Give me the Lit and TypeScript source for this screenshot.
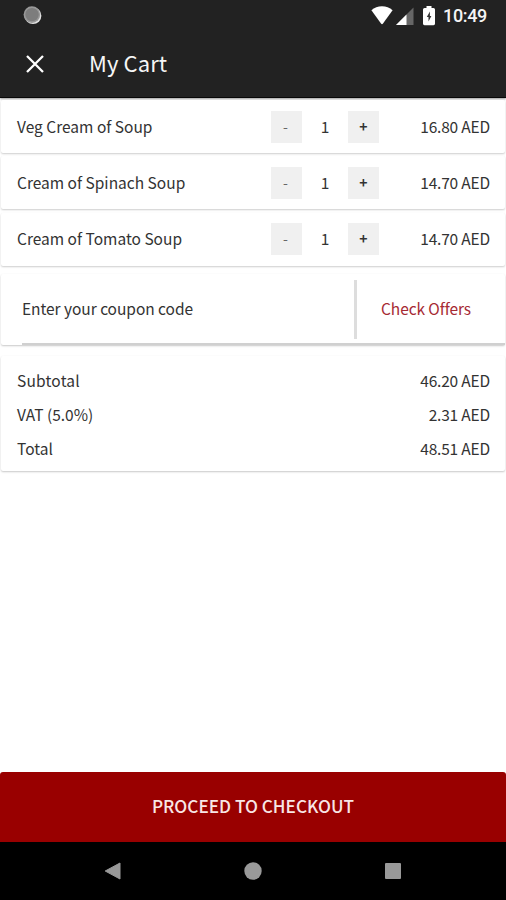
import { LitElement, html, css } from "lit";
import { customElement, property } from "lit/decorators.js";

interface Item { name: string; qty: number; price: string; }

const items: Item[] = [
  { name: "Veg Cream of Soup", qty: 1, price: "16.80 AED" },
  { name: "Cream of Spinach Soup", qty: 1, price: "14.70 AED" },
  { name: "Cream of Tomato Soup", qty: 1, price: "14.70 AED" },
];

const totals = [
  { label: "Subtotal", value: "46.20 AED" },
  { label: "VAT (5.0%)", value: "2.31 AED" },
  { label: "Total", value: "48.51 AED" },
];

@customElement("status-bar")
class StatusBar extends LitElement {
  static styles = css`
    :host { display: flex; align-items: center; height: 31px; padding: 0 19px 0 23px; }
    svg { display: block; }
    .gap { flex: 1; }
    .wifi { margin-right: 3px; }
    .signal { margin-right: 9px; }
    .battery { margin-right: 8px; }
    .time { font: 500 18px/31px Roboto, sans-serif; color: #f4f4f4; width: 44px; white-space: nowrap; letter-spacing: -0.35px; }
  `;
  render() {
    return html`
      <svg width="19" height="19" viewBox="0 0 19 19">
        <circle cx="10" cy="9.7" r="8.4" fill="#e2e2e2" />
        <circle cx="8.9" cy="8.6" r="8.3" fill="#999" />
        <circle cx="9" cy="8.6" r="6.7" fill="#7d7d7d" />
      </svg>
      <span class="gap"></span>
      <svg class="wifi" width="22" height="19" viewBox="0 0 22 19">
        <path d="M0.4 4.2C6 -1 16 -1 21.6 4.2L12 17.6Q11 18.8 10 17.6Z" fill="#fff" />
      </svg>
      <svg class="signal" width="18" height="18" viewBox="0 0 18 18">
        <path d="M17.5 0.5V18H0Z" fill="#666" />
        <path d="M10.5 7.5V18H0Z" fill="#fff" />
      </svg>
      <svg class="battery" width="12" height="20" viewBox="0 0 12 20">
        <path d="M3.5 0H8.5V2H10.5Q12 2 12 3.5V17.8Q12 19.2 10.5 19.2H1.5Q0 19.2 0 17.8V3.5Q0 2 1.5 2H3.5Z" fill="#fff" />
        <path d="M6.9 5.5L3.8 10.9H5.5V15.4L8.4 9.9H6.9Z" fill="#333" />
      </svg>
      <span class="time">10:49</span>
    `;
  }
}

@customElement("cart-item")
class CartItem extends LitElement {
  @property({ attribute: false }) item!: Item;
  static styles = css`
    :host {
      display: grid; grid-template-columns: 254px 31px 46px 31px 1fr; align-items: center;
      height: 53px; padding: 0 15px 0 16px; margin: 0 1px; background: #fff;
      border-radius: 2px; box-shadow: 0 1px 2px rgba(0, 0, 0, 0.2);
    }
    .name, .qty, .price { padding-bottom: 2px; }
    .step { height: 32px; line-height: 31px; background: #f0f0f0; text-align: center; font-size: 14px; }
    .step.minus { color: #666; box-sizing: border-box; padding-right: 2px; }
    .step.plus { font-weight: 700; }
    .qty { text-align: center; }
    .price { text-align: right; letter-spacing: var(--num-spacing); }
  `;
  render() {
    return html`
      <span class="name">${this.item.name}</span>
      <span class="step minus">-</span>
      <span class="qty">${this.item.qty}</span>
      <span class="step plus">+</span>
      <span class="price">${this.item.price}</span>
    `;
  }
}

@customElement("app-root")
class AppRoot extends LitElement {
  static styles = css`
    :host {
      display: flex; flex-direction: column; width: 506px; height: 900px; overflow: hidden;
      background: #fff; color: #333; --num-spacing: -0.18px;
      font: 400 15.5px/20px "Noto Sans CJK SC", "Open Sans", sans-serif;
    }
    .header { height: 98px; background: #222; border-bottom: 1px solid #080808; box-sizing: border-box; flex: none; color: #f6f6f6; box-shadow: 0 1px 2px rgba(0,0,0,.4); }
    .appbar { display: flex; align-items: center; height: 66px; padding-left: 26px; }
    .title { margin: 0 0 0 45px; padding-bottom: 5px; font-size: 22px; font-weight: 400; line-height: 30px; letter-spacing: 0.1px; }
    .items { display: flex; flex-direction: column; gap: 3.3px; padding-top: 2px; }
    .card { margin: 0 1px; background: #fff; border-radius: 2px; box-shadow: 0 1px 2px rgba(0, 0, 0, 0.22); }
    .coupon { display: flex; height: 71px; margin-top: 8px; box-sizing: border-box; padding-left: 21px; }
    .field { display: flex; flex: 1; border-bottom: 2px solid #d0d0d0; }
    .placeholder { flex: 1; line-height: 68px; letter-spacing: -0.04px; }
    .bar { width: 3px; height: 59px; margin-top: 6px; background: #ddd; }
    .offers { width: 148px; box-sizing: border-box; padding-right: 10px; text-align: center; line-height: 68px; color: #a62a33; letter-spacing: -0.1px; }
    .totals { margin-top: 11px; height: 115px; box-sizing: border-box; padding: 7px 15px 0 16px; }
    .line { display: flex; justify-content: space-between; line-height: 34px; }
    .line:first-child .label { letter-spacing: 0.2px; }
    .amount { letter-spacing: var(--num-spacing); }
    .space { flex: 1; }
    .checkout { height: 70px; flex: none; border: 0; padding: 0 0 2px; border-radius: 3px 3px 0 0; background: #900; color: #f8e6e6; font: 500 17.2px/68px "Noto Sans CJK SC", sans-serif; }
    .nav { display: flex; flex: none; align-items: center; justify-content: space-between; height: 58px; background: #000; padding: 0 105px 0 104px; }
  `;
  render() {
    return html`
      <header class="header">
        <status-bar></status-bar>
        <div class="appbar">
          <svg width="18" height="18" viewBox="0 0 18 18"><path d="M1 1L17 17M17 1L1 17" stroke="#fff" stroke-width="2.3" /></svg>
          <h1 class="title">My Cart</h1>
        </div>
      </header>
      <section class="items">${items.map((i) => html`<cart-item .item=${i}></cart-item>`)}</section>
      <section class="card coupon">
        <div class="field">
          <span class="placeholder">Enter your coupon code</span>
          <span class="bar"></span>
          <span class="offers">Check Offers</span>
        </div>
      </section>
      <section class="card totals">
        ${totals.map((t) => html`<div class="line"><span class="label">${t.label}</span><span class="amount">${t.value}</span></div>`)}
      </section>
      <div class="space"></div>
      <button class="checkout">PROCEED TO CHECKOUT</button>
      <nav class="nav">
        <svg width="17" height="18" viewBox="0 0 17 18"><path d="M16 1V17L1.2 9Z" fill="#999" stroke="#999" stroke-linejoin="round" /></svg>
        <svg width="18" height="18" viewBox="0 0 18 18"><circle cx="9" cy="9" r="8.7" fill="#999" /></svg>
        <svg width="16" height="16" viewBox="0 0 16 16"><rect width="16" height="16" rx="1" fill="#999" /></svg>
      </nav>
    `;
  }
}
